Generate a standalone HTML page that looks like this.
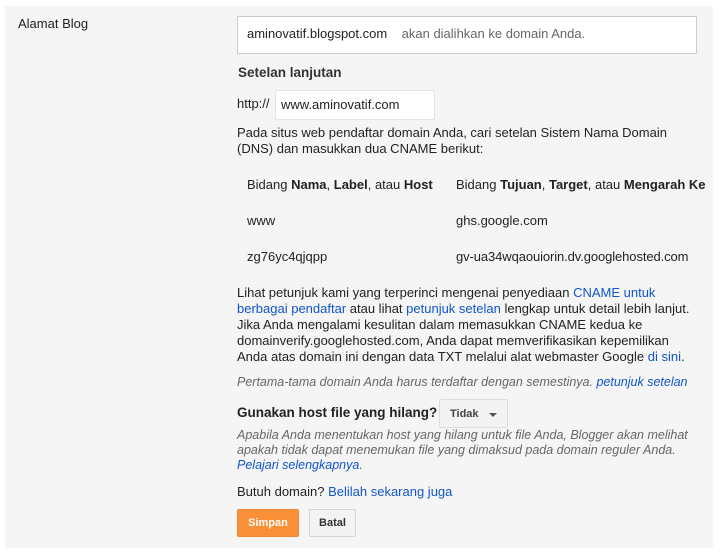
<!DOCTYPE html>
<html><head><style>
body{margin:0;width:720px;height:557px;background:#fff;font-family:"Liberation Sans",Arial,sans-serif;font-size:13px;color:#222;position:relative;overflow:hidden}
.p{position:absolute;left:5px;top:6px;width:708px;height:542px;background:#f5f5f5}
.a{position:absolute;white-space:nowrap;line-height:16px}
a{color:#15c;text-decoration:none}
.i{font-style:italic;color:#666}
b{color:#222}
</style></head><body>
<div class="p"></div>
<div class="a" style="left:18px;top:16px">Alamat Blog</div>
<div style="position:absolute;left:237px;top:16px;width:458px;height:36px;background:#fff;border:1px solid #ccc"></div>
<div class="a" style="left:247px;top:26px">aminovatif.blogspot.com&nbsp;&nbsp;&nbsp; <span style="color:#666">akan dialihkan ke domain Anda.</span></div>
<div class="a" style="left:238px;top:65px;font-weight:bold;color:#333;font-size:13.5px">Setelan lanjutan</div>
<div class="a" style="left:237px;top:96px">http://</div>
<div style="position:absolute;left:275px;top:90px;width:158px;height:28px;background:#fff;border:1px solid #e4e4e4"></div>
<div class="a" style="left:281px;top:97px">www.aminovatif.com</div>
<div class="a" style="left:237px;top:125px">Pada situs web pendaftar domain Anda, cari setelan Sistem Nama Domain<br>(DNS) dan masukkan dua CNAME berikut:</div>
<div class="a" style="left:247px;top:177px">Bidang <b>Nama</b>, <b>Label</b>, atau <b>Host</b></div>
<div class="a" style="left:456px;top:177px">Bidang <b>Tujuan</b>, <b>Target</b>, atau <b>Mengarah Ke</b></div>
<div class="a" style="left:247px;top:213px">www</div>
<div class="a" style="left:456px;top:213px">ghs.google.com</div>
<div class="a" style="left:247px;top:249px">zg76yc4qjqpp</div>
<div class="a" style="left:456px;top:249px;letter-spacing:-0.1px">gv-ua34wqaouiorin.dv.googlehosted.com</div>
<div class="a" style="left:237px;top:285px">Lihat petunjuk kami yang terperinci mengenai penyediaan <a>CNAME untuk</a><br><a>berbagai pendaftar</a> atau lihat <a>petunjuk setelan</a> lengkap untuk detail lebih lanjut.<br>Jika Anda mengalami kesulitan dalam memasukkan CNAME kedua ke<br>domainverify.googlehosted.com, Anda dapat memverifikasikan kepemilikan<br>Anda atas domain ini dengan data TXT melalui alat webmaster Google <a>di sini</a>.</div>
<div class="a i" style="left:237px;top:374px;font-size:12.5px">Pertama-tama domain Anda harus terdaftar dengan semestinya. <a>petunjuk setelan</a></div>
<div class="a" style="left:237px;top:405px;font-weight:bold;font-size:13.5px">Gunakan host file yang hilang?</div>
<div style="position:absolute;left:439px;top:399px;width:67px;height:27px;background:#f3f3f3;border:1px solid #dcdcdc;border-radius:2px"></div>
<div class="a" style="left:450px;top:406px;font-weight:bold;font-size:11px;color:#444">Tidak</div>
<div style="position:absolute;left:489px;top:413px;border-left:4px solid transparent;border-right:4px solid transparent;border-top:4px solid #555"></div>
<div class="a i" style="left:237px;top:428px;font-size:12.5px;line-height:15px">Apabila Anda menentukan host yang hilang untuk file Anda, Blogger akan melihat<br>apakah tidak dapat menemukan file yang dimaksud pada domain reguler Anda.<br><a>Pelajari selengkapnya</a>.</div>
<div class="a" style="left:237px;top:484px">Butuh domain? <a>Belilah sekarang juga</a></div>
<div style="position:absolute;left:237px;top:509px;width:62px;height:28px;background:#f98f36;border:1px solid #ec8833;border-radius:2px;box-sizing:border-box;color:#fff;font-weight:bold;font-size:11px;text-align:center;line-height:26px">Simpan</div>
<div style="position:absolute;left:309px;top:509px;width:47px;height:28px;background:#f3f3f3;border:1px solid #d6d6d6;border-radius:2px;box-sizing:border-box;color:#333;font-weight:bold;font-size:11px;text-align:center;line-height:26px">Batal</div>
</body></html>
